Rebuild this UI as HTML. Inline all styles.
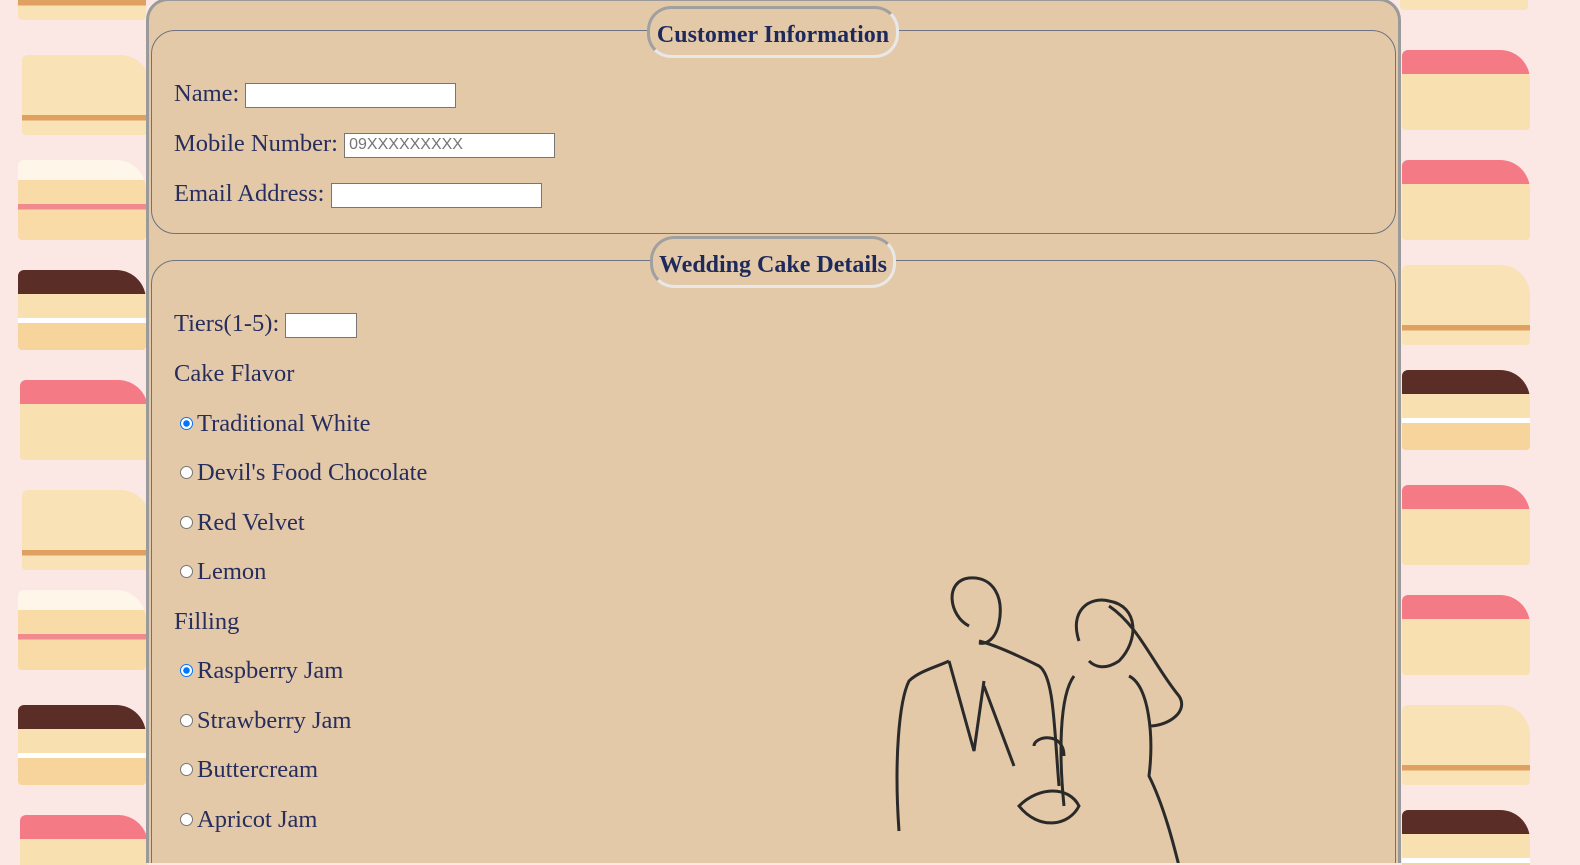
<!DOCTYPE html>
<html style="height:865px;overflow:hidden"><head><style>
body{margin:0;width:1580px;height:865px;overflow:hidden;background:#fbe7e3;font-family:"Liberation Serif",serif;position:relative}
.cake{position:absolute;width:128px;height:80px;border-radius:6px 30px 4px 4px;background:linear-gradient(#f9e2b6 0 75%,#e0a060 75% 82%,#f9e2b6 82%)}
.c1{background:linear-gradient(#fff6ea 0 25%,#f9dba8 25% 55%,#f08a90 55% 62%,#f9dba8 62%)}
.c2{background:linear-gradient(#5a2e26 0 30%,#f9e0b0 30% 60%,#fff 60% 66%,#f6d49c 66%)}
.c3{background:linear-gradient(#f47a86 0 30%,#f9e0b0 30%)}
.wrap{position:absolute;left:146px;top:-2px;width:1249px;height:862px;background:#e3c9a8;border:3px solid #9a9a9a;border-bottom:0;border-radius:22px 22px 0 0;overflow:hidden}
fieldset{position:absolute;left:2px;width:1245px;border:1px solid #6d7380;border-radius:24px;margin:0;padding:0;box-sizing:border-box}
.lg{position:absolute;background:#e3c9a8;border:3px solid;border-color:#a0a0a0 #e8e8e8 #e8e8e8 #a0a0a0;border-radius:24px;font-weight:bold;font-size:24px;color:#1f2a5c;padding:0 4px;height:52px;line-height:52px;box-sizing:border-box;text-align:center}
.t{position:absolute;left:22px;font-size:24.5px;color:#272e5e;white-space:nowrap}
input[type=text]{font-size:16px;height:25px;border:1px solid #767676;box-sizing:border-box;vertical-align:middle;padding:0 4px;font-family:"Liberation Sans",sans-serif;background:#fff}
.r{display:inline-block;width:13px;height:13px;border:1px solid #767676;border-radius:50%;background:#fff;vertical-align:middle;margin:0 4px 4px 6px;box-sizing:border-box}
.r.on{border:1px solid #0075ff;background:radial-gradient(#0075ff 0 3px,#fff 3.5px)}
</style></head><body>
<div class="cake" style="left:18px;top:-60px"></div>
<div class="cake" style="left:22px;top:55px"></div>
<div class="cake c1" style="left:18px;top:160px"></div>
<div class="cake c2" style="left:18px;top:270px"></div>
<div class="cake c3" style="left:20px;top:380px"></div>
<div class="cake" style="left:22px;top:490px"></div>
<div class="cake c1" style="left:18px;top:590px"></div>
<div class="cake c2" style="left:18px;top:705px"></div>
<div class="cake c3" style="left:20px;top:815px"></div>
<div class="cake" style="left:1400px;top:-70px"></div>
<div class="cake c3" style="left:1402px;top:50px"></div>
<div class="cake c3" style="left:1402px;top:160px"></div>
<div class="cake" style="left:1402px;top:265px"></div>
<div class="cake c2" style="left:1402px;top:370px"></div>
<div class="cake c3" style="left:1402px;top:485px"></div>
<div class="cake c3" style="left:1402px;top:595px"></div>
<div class="cake" style="left:1402px;top:705px"></div>
<div class="cake c2" style="left:1402px;top:810px"></div>
<div class="wrap">
<fieldset style="top:29px;height:204px">
<div class="t" style="top:49px">Name: <input type="text" style="width:211px"></div>
<div class="t" style="top:99px">Mobile Number: <input type="text" style="width:211px;color:#757575" value="09XXXXXXXXX"></div>
<div class="t" style="top:149px">Email Address: <input type="text" style="width:211px"></div>
</fieldset>
<div class="lg" style="left:498px;top:5px;width:252px">Customer Information</div>
<fieldset style="top:259px;height:700px">
<div class="t" style="top:49px">Tiers(1-5): <input type="text" style="width:72px"></div>
<div class="t" style="top:99px">Cake Flavor</div>
<div class="t" style="top:149px"><span class="r on"></span>Traditional White</div>
<div class="t" style="top:198px"><span class="r"></span>Devil's Food Chocolate</div>
<div class="t" style="top:248px"><span class="r"></span>Red Velvet</div>
<div class="t" style="top:297px"><span class="r"></span>Lemon</div>
<div class="t" style="top:347px">Filling</div>
<div class="t" style="top:396px"><span class="r on"></span>Raspberry Jam</div>
<div class="t" style="top:446px"><span class="r"></span>Strawberry Jam</div>
<div class="t" style="top:495px"><span class="r"></span>Buttercream</div>
<div class="t" style="top:545px"><span class="r"></span>Apricot Jam</div>
</fieldset>
<div class="lg" style="left:501px;top:235px;width:246px">Wedding Cake Details</div>
<svg style="position:absolute;left:725px;top:565px" width="340" height="300" fill="none" stroke="#2a2a2a" stroke-width="3">
<path d="M95 60c-20-10-25-45 0-48 25-2 35 20 30 45-3 15-12 22-20 20"/>
<path d="M75 95c-10 5-30 10-40 20-10 20-15 80-10 150M105 75c20 5 50 20 60 25 15 10 15 60 20 120"/>
<path d="M75 95l25 90 10-70M110 120l30 80"/>
<path d="M205 75c-10-30 10-45 30-40 30 5 30 40 10 60-15 10-25 5-30 0"/>
<path d="M235 40c30 20 45 60 70 90 10 15-10 30-30 30M200 110c-15 20-15 80-10 130M255 110c20 10 25 60 20 100 15 30 25 70 30 90"/>
<path d="M145 240c20-20 50-20 60 0-10 20-40 25-60 0zM160 180c0-10 30-15 30 10"/>
</svg>
</div>
</body></html>
